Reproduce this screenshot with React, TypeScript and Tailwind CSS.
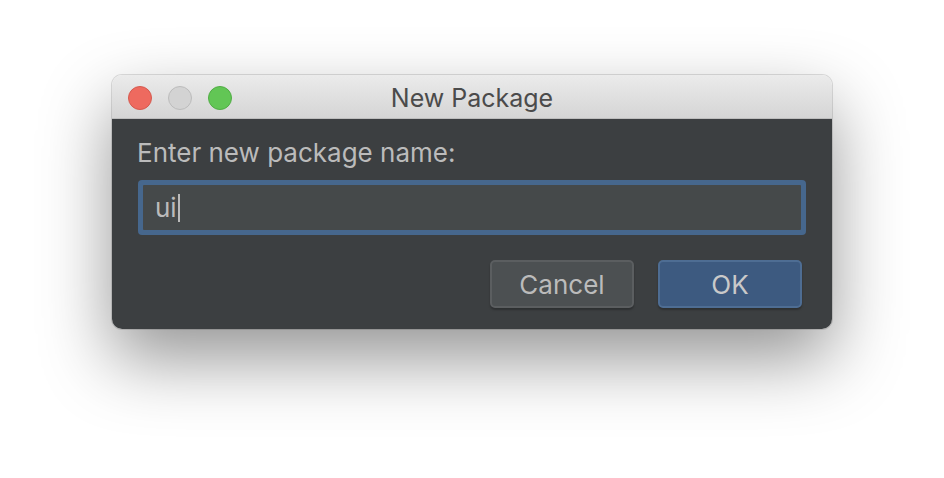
export default function App() {
  return (
    <main className="w-[944px] h-[478px] bg-white flex justify-center pt-[75px] font-['Inter',sans-serif]">
      <div className="w-[720px] h-[254px] rounded-[10px] overflow-hidden flex flex-col shadow-[0_30px_70px_rgba(0,0,0,0.42),0_0_0_1px_rgba(0,0,0,0.12)]">
        {/* title bar */}
        <div className="relative h-[44px] shrink-0 bg-gradient-to-b from-[#ebebeb] to-[#d5d5d5] border-b border-[#bdbdbd] flex items-center justify-center pt-[4px]">
          <div className="absolute left-[16px] top-[11px] flex gap-[16px]">
            <span className="w-[24px] h-[24px] rounded-full bg-[#ee6a5f] border border-[#d55a4f]" />
            <span className="w-[24px] h-[24px] rounded-full bg-[#d3d3d3] border border-[#bcbcbc]" />
            <span className="w-[24px] h-[24px] rounded-full bg-[#62c655] border border-[#51ad45]" />
          </div>
          <span className="text-[25px] text-[#4b4b4b] leading-none">New Package</span>
        </div>

        {/* body */}
        <div className="flex-1 bg-[#3c3f41] px-[26px] pt-[18px] flex flex-col">
          <label className="text-[26px] leading-[32px] text-[#bbbbbb] -ml-[1px]">Enter new package name:</label>
          <div className="mt-[11px] h-[55px] rounded-[4px] bg-[#46678d] p-[5px]">
            <div className="h-full rounded-[1px] bg-[#45494a] flex items-center pl-[12px]">
              <span className="text-[26px] text-[#bbbbbb] leading-none">ui</span>
              <span className="w-[2px] h-[28px] bg-[#bbbbbb] ml-[1px]" />
            </div>
          </div>
          <div className="mt-[25px] flex justify-end gap-[24px] pr-[4px]">
            <button className="w-[144px] h-[48px] rounded-[5px] bg-[#4c5052] border-2 border-[#5b5e60] text-[26px] text-[#bbbbbb] shadow-[0_2px_2px_rgba(0,0,0,0.25)]">
              Cancel
            </button>
            <button className="w-[144px] h-[48px] rounded-[5px] bg-[#3d5a80] border-2 border-[#4e6d93] text-[26px] text-[#c9c9c9] shadow-[0_2px_2px_rgba(0,0,0,0.25)]">
              OK
            </button>
          </div>
        </div>
      </div>
    </main>
  );
}
